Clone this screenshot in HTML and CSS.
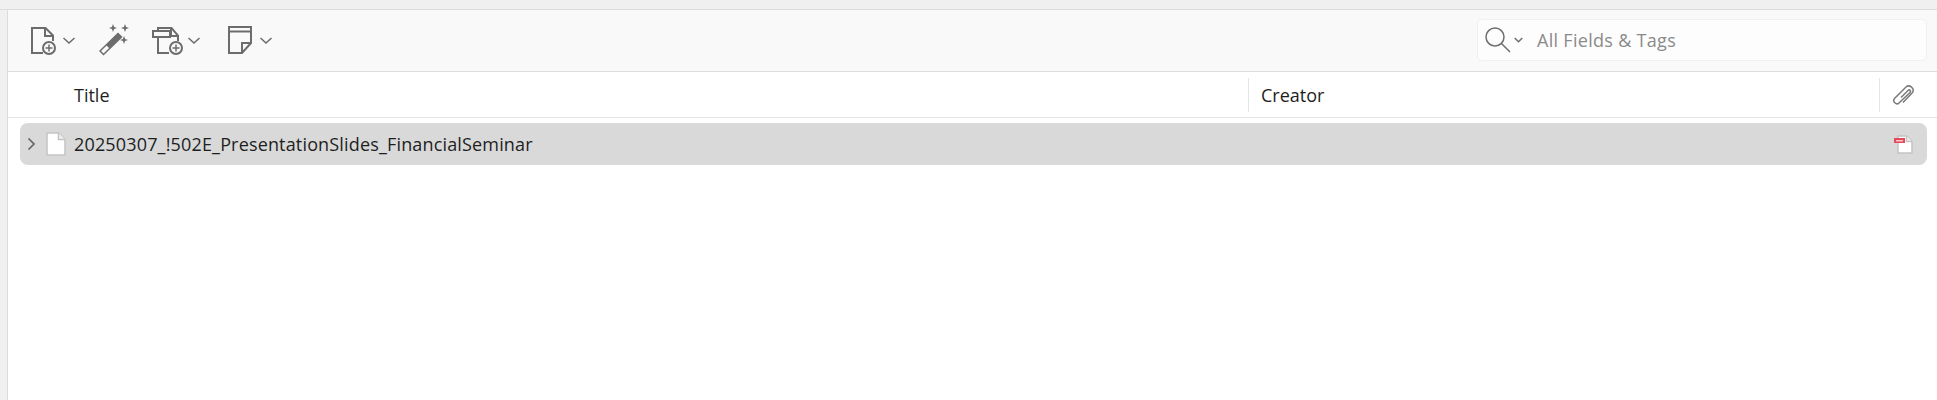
FILE: index.html
```html
<!DOCTYPE html>
<html lang="en">
<head>
<meta charset="utf-8">
<title>Items</title>
<link rel="stylesheet" href="styles.css">
</head>
<body>
<div class="topstrip"></div>
<div class="main">
  <div class="sidestrip"></div>
  <div class="pane">
    <div class="toolbar">
      <div class="tools">
        <svg class="i-new" width="30" height="29" viewBox="0 0 30 29"><path class="st" d="M13 27H2V2h13.500L23 9.500V15"/><path class="st" d="M15 2v8h8"/><circle class="st" cx="19" cy="22" r="6"/><path class="st1" d="M19 18.500v7M15.500 22h7"/></svg>
        <svg class="chev" width="12" height="7" viewBox="0 0 12 7"><path class="ch" d="M.5 1 6 6l5.500-5"/></svg>
        <svg class="i-wand" width="30" height="33" viewBox="0 0 30 33"><path class="st1" d="M1 27 19 9.500l3.500 3.500L4.500 30.500Z"/><path class="fl" d="M7 21 19 9.500l3.500 3.500L10.500 24.500Z"/><path class="fl" d="M14 0l1.100 2.900L18 4l-2.900 1.100L14 8l-1.100-2.900L10 4l2.900-1.100ZM26 0l1.100 2.900L30 4l-2.900 1.100L26 8l-1.100-2.900L22 4l2.900-1.100ZM25 12l1.100 2.900L29 16l-2.900 1.100L25 20l-1.100-2.900L21 16l2.900-1.100Z"/></svg>
        <svg class="i-att" width="31" height="29" viewBox="0 0 31 29"><path class="st" d="M6 5V2h13.500L26 9.500V15M6 11v16h11"/><path class="st" d="M19 2v8h7"/><rect class="st" x="1" y="5" width="17" height="6"/><circle class="st" cx="24" cy="22" r="6"/><path class="st1" d="M24 18.500v7M20.500 22h7"/></svg>
        <svg class="chev chev-att" width="12" height="7" viewBox="0 0 12 7"><path class="ch" d="M.5 1 6 6l5.500-5"/></svg>
        <svg class="i-note" width="24" height="29" viewBox="0 0 24 29"><path class="st" d="M1 1h22v16l-9 10H1Z"/><path class="st" d="M1 5.500h22"/><path class="st" d="M23 17h-9v10"/></svg>
        <svg class="chev chev-note" width="12" height="7" viewBox="0 0 12 7"><path class="ch" d="M.5 1 6 6l5.500-5"/></svg>
      </div>
      <div class="search">
        <svg class="s-icon" width="26" height="26" viewBox="0 0 26 26"><circle class="sg" cx="10" cy="10" r="9"/><path class="sg" d="m16.500 16.500 8.500 8.500"/></svg>
        <svg class="s-chev" width="9" height="6" viewBox="0 0 9 6"><path class="sc" d="M.7 1 4.500 4.700 8.300 1"/></svg>
        <span class="s-text">All Fields &amp; Tags</span>
      </div>
    </div>
    <div class="header">
      <div class="col-title">Title</div>
      <div class="col-creator">Creator</div>
      <div class="col-attach">
        <svg width="24" height="22" viewBox="0 0 24 22"><path class="clip" d="M9 13.500 16 6.500c1.500-1.500 3.500.5 2 2L7 19c-2.500 2.500-7-1.500-4.500-4.500L14 3c3.500-3 9 1.500 6.500 5.500L11 18.500"/></svg>
      </div>
    </div>
    <div class="rows">
      <div class="row">
        <svg class="twisty" width="9" height="14" viewBox="0 0 9 14"><path class="tw" d="M1.500 1.500 7 7l-5.500 5.500"/></svg>
        <svg class="doc" width="20" height="24" viewBox="0 0 20 24"><path class="dc" d="M1 1h11.500L19 7.500V23H1Z"/><path class="dl" d="M12.500 1v6.500H19"/></svg>
        <span class="row-title">20250307_!502E_PresentationSlides_FinancialSeminar</span>
        <svg class="pdf" width="19" height="19" viewBox="0 0 19 19"><path class="dc" d="M4 1h8.500L18 6.500V18H4Z"/><path class="dl" d="M12.500 1v5.500H18"/><rect class="pdfbar" x="0" y="3" width="11" height="5"/><rect class="pdfin" x="2" y="5" width="7" height="1.500"/></svg>
      </div>
    </div>
  </div>
</div>
</body>
</html>
```

FILE: styles.css
```css
* { box-sizing: border-box; }
html, body { margin: 0; padding: 0; height: 100%; overflow: hidden; background: #fff; }
body { display: flex; flex-direction: column; font-family: "Open Sans", "Noto Sans", sans-serif; color: #1e1e1e; }
svg { display: block; flex: none; }

.topstrip { height: 10px; background: #f0f0f0; border-bottom: 1px solid #dcdcdc; flex: none; }
.main { flex: 1; display: flex; min-height: 0; }
.sidestrip { width: 8px; background: #f0f0f0; border-right: 1px solid #dcdcdc; flex: none; }
.pane { flex: 1; min-width: 0; display: flex; flex-direction: column; }

.toolbar { height: 62px; flex: none; background: #f9f9f9; border-bottom: 1px solid #dcdcdc; display: flex; align-items: center; justify-content: space-between; padding: 0 10px 0 22px; }
.tools { display: flex; align-items: center; }
.st { fill: none; stroke: #6c6c6c; stroke-width: 2; }
.st1 { fill: none; stroke: #6c6c6c; stroke-width: 1.500; }
.fl { fill: #6c6c6c; }
.ch { fill: none; stroke: #6c6c6c; stroke-width: 1.500; }
.chev { margin-left: 3px; }
.i-wand { margin-left: 24px; }
.i-att { margin-left: 23px; }
.i-note { margin-left: 28px; }
.chev-att { margin-left: 5px; }
.chev-note { margin-left: 8px; }

.search { width: 450px; height: 42px; margin-bottom: 1px; background: #fdfdfd; border: 1px solid #f0f0f0; border-radius: 5px; display: flex; align-items: center; padding-left: 7px; }
.sg { fill: none; stroke: #6e6e6e; stroke-width: 1.500; }
.sc { fill: none; stroke: #6e6e6e; stroke-width: 1.500; }
.s-chev { margin-left: 3px; }
.s-text { margin-left: 14px; font-size: 18px; letter-spacing: .3px; color: #8a8a8a; white-space: nowrap; }

.header { height: 46px; flex: none; background: #fff; border-bottom: 1px solid #e4e4e4; display: flex; align-items: center; font-size: 18px; }
.col-title { width: 1240px; padding-left: 66px; }
.col-creator { flex: 1; height: 34px; line-height: 34px; border-left: 1px solid #e4e4e4; padding-left: 12px; }
.col-attach { width: 58px; height: 34px; border-left: 1px solid #e4e4e4; display: flex; align-items: center; padding-left: 12px; }
.clip { fill: none; stroke: #7a7a7a; stroke-width: 1.500; }

.rows { padding: 5px 10px 0 12px; }
.row { height: 42px; background: #d9d9d9; border-radius: 8px; display: flex; align-items: center; padding: 0 14px 0 7px; font-size: 18px; letter-spacing: .16px; }
.tw { fill: none; stroke: #666; stroke-width: 1.700; }
.doc { margin-left: 10px; }
.dc { fill: #fff; stroke: #c4c4c4; stroke-width: 1.500; }
.dl { fill: #f0f0f0; stroke: #c4c4c4; stroke-width: 1.500; }
.row-title { margin-left: 8px; flex: 1; white-space: nowrap; }
.pdfbar { fill: #e24a5a; }
.pdfin { fill: #f6c4ca; }
```
